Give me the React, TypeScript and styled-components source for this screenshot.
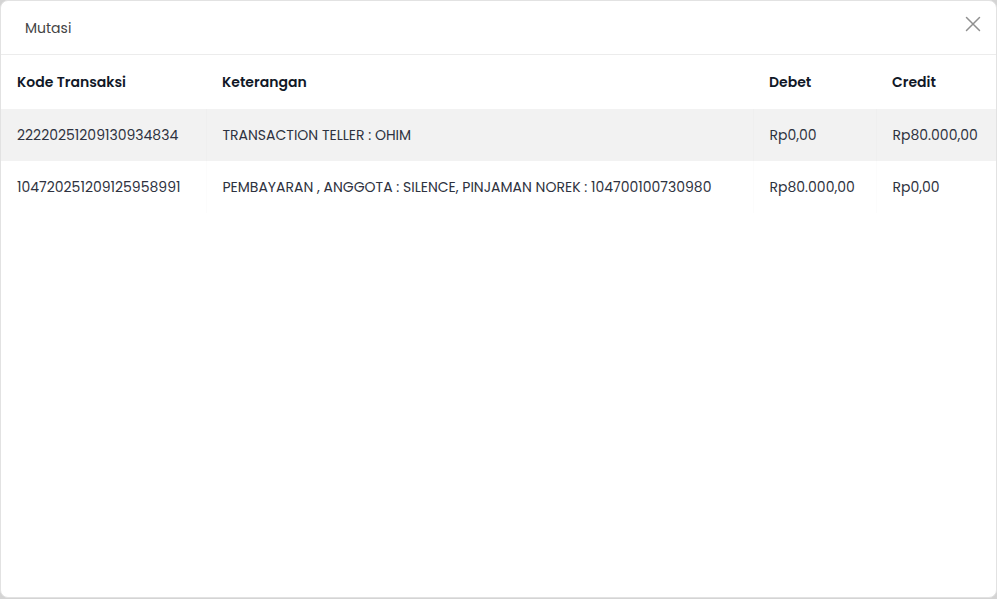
import React from 'react'
import styled, { createGlobalStyle } from 'styled-components'

const GlobalStyle = createGlobalStyle`
  html, body {
    margin: 0;
    padding: 0;
    background: #d4d4d4;
  }
  body {
    font-family: Poppins, "Open Sans", "Liberation Sans", sans-serif;
  }
`

const Modal = styled.div`
  box-sizing: border-box;
  width: 997px;
  height: 598px;
  background: #ffffff;
  border: 1px solid #e2e2e2;
  border-radius: 8px;
  overflow: hidden;
  display: flex;
  flex-direction: column;
`

const ModalHeader = styled.div`
  height: 53px;
  display: flex;
  align-items: center;
  justify-content: space-between;
  padding: 0 15px 0 24px;
  border-bottom: 1px solid #ececec;
`

const Title = styled.h5`
  margin: 0;
  padding-top: 1px;
  font-size: 14px;
  font-weight: 400;
  color: #444444;
`

const CloseButton = styled.button`
  border: none;
  background: none;
  padding: 0;
  margin-top: -7px;
  width: 16px;
  height: 16px;
  cursor: pointer;
  display: flex;
  align-items: center;
  justify-content: center;
`

const Table = styled.table`
  width: 100%;
  table-layout: fixed;
  border-collapse: collapse;
  font-size: 14px;
`

const Th = styled.th`
  text-align: left;
  font-weight: 600;
  color: #111827;
  height: 54px;
  padding: 0 16px;
  white-space: nowrap;
`

const Row = styled.tr<{ striped?: boolean }>`
  background: ${({ striped }) => (striped ? '#f2f2f2' : '#ffffff')};
`

const Td = styled.td`
  height: 52px;
  padding: 0 16px;
  color: #2e3240;
  white-space: nowrap;
  border-left: 1px solid rgba(0, 0, 0, 0.012);
  &:first-child {
    border-left: none;
  }
`

const columns = [
  { label: 'Kode Transaksi', width: 205 },
  { label: 'Keterangan', width: 547 },
  { label: 'Debet', width: 123 },
  { label: 'Credit', width: 122 },
]

const rows = [
  {
    kode: '2222025120913093483' + '4',
    ket: 'TRANSACTION TELLER : OHIM',
    debet: 'Rp0,00',
    credit: 'Rp80.000,00',
  },
  {
    kode: '104720251209125958991',
    ket: 'PEMBAYARAN , ANGGOTA : SILENCE, PINJAMAN NOREK : 104700100730980',
    debet: 'Rp80.000,00',
    credit: 'Rp0,00',
  },
]

export default function App() {
  return (
    <>
      <GlobalStyle />
      <Modal>
        <ModalHeader>
          <Title>Mutasi</Title>
          <CloseButton aria-label="Close">
            <svg width="16" height="16" viewBox="0 0 16 16">
              <path d="M1.5 1.5 L14.5 14.5 M14.5 1.5 L1.5 14.5" stroke="#909090" strokeWidth="1.5" strokeLinecap="round" />
            </svg>
          </CloseButton>
        </ModalHeader>
        <Table>
          <colgroup>
            {columns.map((c) => (
              <col key={c.label} style={{ width: c.width }} />
            ))}
          </colgroup>
          <thead>
            <tr>
              {columns.map((c) => (
                <Th key={c.label}>{c.label}</Th>
              ))}
            </tr>
          </thead>
          <tbody>
            {rows.map((r, i) => (
              <Row key={r.kode} striped={i % 2 === 0}>
                <Td>{r.kode}</Td>
                <Td>{r.ket}</Td>
                <Td>{r.debet}</Td>
                <Td>{r.credit}</Td>
              </Row>
            ))}
          </tbody>
        </Table>
      </Modal>
    </>
  )
}
